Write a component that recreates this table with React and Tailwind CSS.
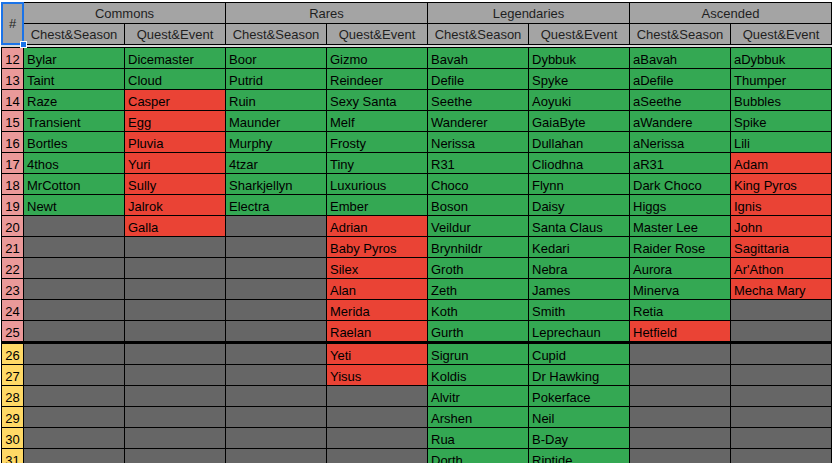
const G = 'g';
const R = 'r';
const E = null;

const GROUPS = ['Commons', 'Rares', 'Legendaries', 'Ascended'];

// [text, colour] per column; E = empty grey cell
const TOP_ROWS = [
  [12, [['Bylar', G], ['Dicemaster', G], ['Boor', G], ['Gizmo', G], ['Bavah', G], ['Dybbuk', G], ['aBavah', G], ['aDybbuk', G]]],
  [13, [['Taint', G], ['Cloud', G], ['Putrid', G], ['Reindeer', G], ['Defile', G], ['Spyke', G], ['aDefile', G], ['Thumper', G]]],
  [14, [['Raze', G], ['Casper', R], ['Ruin', G], ['Sexy Santa', G], ['Seethe', G], ['Aoyuki', G], ['aSeethe', G], ['Bubbles', G]]],
  [15, [['Transient', G], ['Egg', R], ['Maunder', G], ['Melf', G], ['Wanderer', G], ['GaiaByte', G], ['aWandere', G], ['Spike', G]]],
  [16, [['Bortles', G], ['Pluvia', R], ['Murphy', G], ['Frosty', G], ['Nerissa', G], ['Dullahan', G], ['aNerissa', G], ['Lili', G]]],
  [17, [['4thos', G], ['Yuri', R], ['4tzar', G], ['Tiny', G], ['R31', G], ['Cliodhna', G], ['aR31', G], ['Adam', R]]],
  [18, [['MrCotton', G], ['Sully', R], ['Sharkjellyn', G], ['Luxurious', G], ['Choco', G], ['Flynn', G], ['Dark Choco', G], ['King Pyros', R]]],
  [19, [['Newt', G], ['Jalrok', R], ['Electra', G], ['Ember', G], ['Boson', G], ['Daisy', G], ['Higgs', G], ['Ignis', R]]],
  [20, [E, ['Galla', R], E, ['Adrian', R], ['Veildur', G], ['Santa Claus', G], ['Master Lee', G], ['John', R]]],
  [21, [E, E, E, ['Baby Pyros', R], ['Brynhildr', G], ['Kedari', G], ['Raider Rose', G], ['Sagittaria', R]]],
  [22, [E, E, E, ['Silex', R], ['Groth', G], ['Nebra', G], ['Aurora', G], ["Ar'Athon", R]]],
  [23, [E, E, E, ['Alan', R], ['Zeth', G], ['James', G], ['Minerva', G], ['Mecha Mary', R]]],
  [24, [E, E, E, ['Merida', R], ['Koth', G], ['Smith', G], ['Retia', G], E]],
  [25, [E, E, E, ['Raelan', R], ['Gurth', G], ['Leprechaun', G], ['Hetfield', R], E]],
];

const BOTTOM_ROWS = [
  [26, [E, E, E, ['Yeti', R], ['Sigrun', G], ['Cupid', G], E, E]],
  [27, [E, E, E, ['Yisus', R], ['Koldis', G], ['Dr Hawking', G], E, E]],
  [28, [E, E, E, E, ['Alvitr', G], ['Pokerface', G], E, E]],
  [29, [E, E, E, E, ['Arshen', G], ['Neil', G], E, E]],
  [30, [E, E, E, E, ['Rua', G], ['B-Day', G], E, E]],
  [31, [E, E, E, E, ['Dorth', G], ['Riptide', G], E, E]],
];

function Cell({ cell }) {
  if (!cell) return <div className="bg-[#666666]" />;
  const [text, tone] = cell;
  return (
    <div className={`${tone === G ? 'bg-[#34a853]' : 'bg-[#ea4335]'} truncate pl-[3px] leading-[24px] text-black`}>
      {text}
    </div>
  );
}

function Rows({ rows, numBg }) {
  return (
    <div className="grid grid-cols-[21px_repeat(8,100px)] auto-rows-[20px] gap-px">
      {rows.map(([n, cells]) => [
        <div key={`n${n}`} className={`${numBg} overflow-hidden text-center leading-[24px] text-black`}>{n}</div>,
        ...cells.map((c, i) => <Cell key={`${n}-${i}`} cell={c} />),
      ])}
    </div>
  );
}

export default function App() {
  return (
    <div className="h-[463px] w-[836px] overflow-hidden bg-white pl-px pt-[2px] font-['Liberation_Sans',Arial,sans-serif] text-[13px]">
      <div className="grid w-[831px] grid-cols-[21px_repeat(8,100px)] grid-rows-[20px_20px] gap-px bg-black p-px text-[#1f1f1f]">
        <div className="relative row-span-2 bg-[#a4a4a4] text-center leading-[41px]">
          #
          <div className="absolute -inset-px border-2 border-[#1a73e8]" />
          <div className="absolute -bottom-[4px] -right-[4px] h-[7px] w-[7px] border border-white bg-[#1a73e8]" />
        </div>
        {GROUPS.map((g) => (
          <div key={g} className="col-span-2 overflow-hidden bg-[#a4a4a4] text-center leading-[22px]">{g}</div>
        ))}
        {GROUPS.flatMap((g) => [
          <div key={`${g}a`} className="overflow-hidden bg-[#a4a4a4] text-center leading-[22px]">Chest&amp;Season</div>,
          <div key={`${g}b`} className="overflow-hidden bg-[#a4a4a4] text-center leading-[22px]">Quest&amp;Event</div>,
        ])}
      </div>
      <div className="h-[2px] w-[831px] bg-[#d9d9d9]" />
      <div className="flex w-[831px] flex-col gap-[3px] bg-black p-px">
        <Rows rows={TOP_ROWS} numBg="bg-[#ea9999]" />
        <Rows rows={BOTTOM_ROWS} numBg="bg-[#ffd966]" />
      </div>
    </div>
  );
}
